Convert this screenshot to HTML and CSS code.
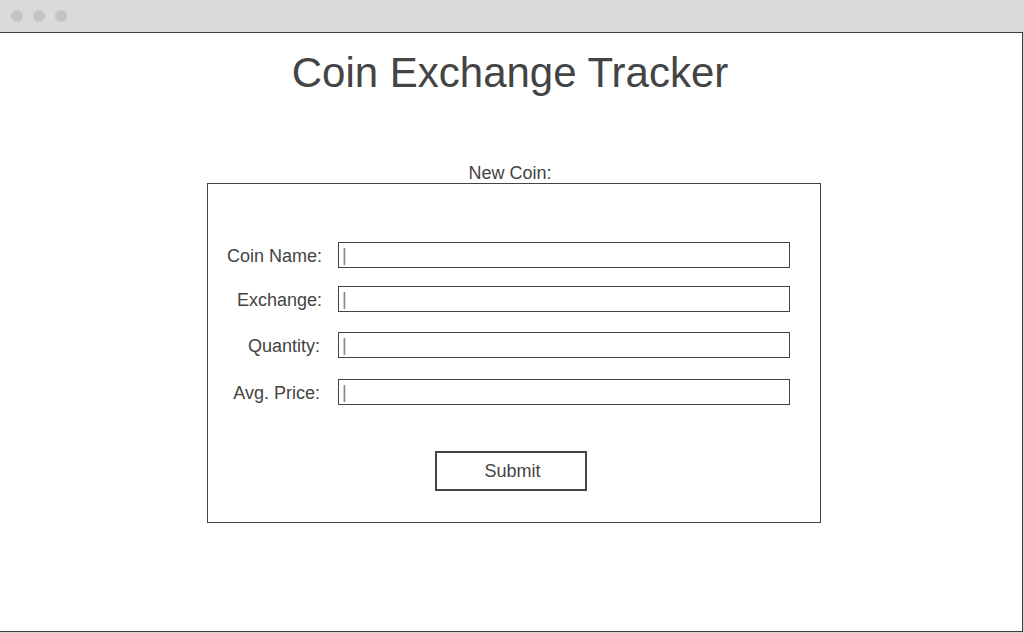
FILE: index.html
```html
<!DOCTYPE html>
<html>
<head>
<meta charset="utf-8">
<title>Coin Exchange Tracker</title>
<link rel="stylesheet" href="styles.css">
</head>
<body>
<div class="window">
  <div class="titlebar">
    <span class="dot"></span><span class="dot"></span><span class="dot"></span>
  </div>
  <div class="content">
    <h1 class="title">Coin Exchange Tracker</h1>
    <div class="section-label">New Coin:</div>
    <form class="coin-form">
      <div class="fields">
        <label class="label">Coin Name:</label>
        <div class="input"><span class="caret">|</span></div>
        <label class="label">Exchange:</label>
        <div class="input"><span class="caret">|</span></div>
        <label class="label row-q">Quantity:</label>
        <div class="input row-q"><span class="caret">|</span></div>
        <label class="label row-p">Avg. Price:</label>
        <div class="input row-p"><span class="caret">|</span></div>
      </div>
      <div class="actions">
        <button type="button" class="submit">Submit</button>
      </div>
    </form>
  </div>
</div>
</body>
</html>
```

FILE: styles.css
```css
html, body {
  margin: 0;
  padding: 0;
  background: #ffffff;
}

body {
  font-family: "Liberation Sans", Arial, sans-serif;
  color: #444444;
}

.window {
  width: 1024px;
  height: 633px;
  background: #d6d6d6;
  display: flex;
  flex-direction: column;
}

.titlebar {
  height: 32px;
  flex: none;
  background: #dadada;
  display: flex;
  align-items: center;
  gap: 10px;
  padding-left: 11px;
  padding-bottom: 1px;
  box-sizing: border-box;
}

.dot {
  width: 12px;
  height: 12px;
  border-radius: 50%;
  background: #c4c4c4;
}

.content {
  width: 1023px;
  height: 600px;
  box-sizing: border-box;
  border-top: 1px solid #3c3c3c;
  border-right: 1px solid #3c3c3c;
  border-bottom: 1px solid #3c3c3c;
  background: #ffffff;
  display: flex;
  flex-direction: column;
  align-items: center;
}

.title {
  margin: 16px 0 0 0;
  font-size: 42px;
  font-weight: normal;
  line-height: 48px;
  color: #444444;
  padding-right: 2px;
}

.section-label {
  margin-top: 67px;
  font-size: 18px;
  line-height: 19px;
  padding-right: 2px;
}

.coin-form {
  width: 614px;
  height: 340px;
  box-sizing: border-box;
  border: 1px solid #444444;
  margin-left: 6px;
  padding: 58px 0 0 17px;
  display: flex;
  flex-direction: column;
}

.fields {
  display: grid;
  grid-template-columns: 97px 452px;
  column-gap: 16px;
  row-gap: 18px;
  align-items: center;
}

.label {
  text-align: right;
  font-size: 18px;
  line-height: 21px;
  padding-top: 2px;
}

.label.row-q,
.label.row-p {
  padding-right: 2px;
}

.row-q {
  margin-top: 2px;
}

.row-p {
  margin-top: 3px;
}

.input {
  height: 26px;
  box-sizing: border-box;
  border: 1px solid #444444;
  display: flex;
  align-items: center;
  padding-left: 3px;
}

.caret {
  font-size: 18px;
  line-height: 20px;
  color: #808080;
}

.actions {
  display: flex;
  justify-content: center;
  margin-top: 46px;
  padding-right: 24px;
}

.submit {
  width: 152px;
  height: 40px;
  box-sizing: border-box;
  border: 2px solid #444444;
  background: #ffffff;
  font-family: "Liberation Sans", Arial, sans-serif;
  font-size: 18px;
  color: #444444;
  padding: 0 0 0 4px;
}
```
